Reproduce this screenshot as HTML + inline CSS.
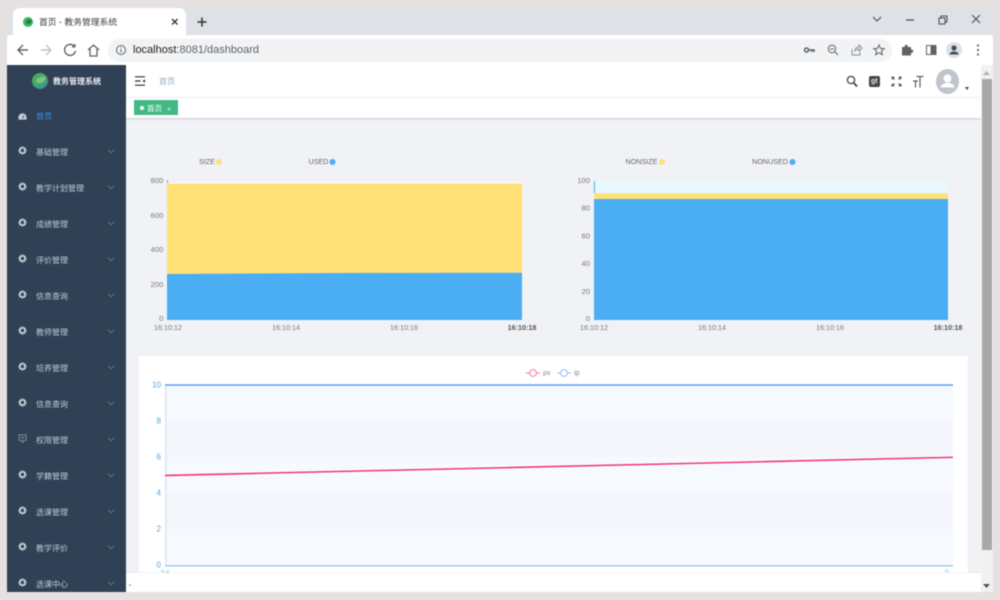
<!DOCTYPE html>
<html lang="zh"><head><meta charset="utf-8"><title>首页 - 教务管理系统</title>
<style>
html,body{margin:0;padding:0;width:1000px;height:600px;overflow:hidden;background:#e6e1e1}
body{font-family:"Liberation Sans","Noto Sans CJK SC",sans-serif;position:relative}
#w{position:absolute;left:0;top:0;width:1000px;height:600px;filter:blur(.4px)}
.a{position:absolute}
.t{position:absolute;white-space:nowrap;line-height:1}
.m{position:absolute;left:36px;font-size:8px;color:#bfcbd9;white-space:nowrap;line-height:10px;margin-top:1px}
.g{position:absolute;left:18px;width:9px;height:9px}
.c{position:absolute;left:107px;width:8px;height:5px}
</style></head><body><div id="w">
<div class="a" style="left:7px;top:8px;width:986px;height:27px;background:#dee1e6"></div>
<div class="a" style="left:13px;top:8px;width:173px;height:27px;background:#fff;border-radius:7px 7px 0 0"></div>
<div class="a" style="left:7px;top:35px;width:986px;height:30px;background:#fff"></div>
<svg class="a" style="left:21px;top:15px" width="14" height="14" viewBox="0 0 14 14"><circle cx="7" cy="7" r="5" fill="#41b45a"/><path d="M5 8c0-3 3-4 6-3-1 3-3 5-6 3z" fill="#1f7a4a"/></svg>
<div class="t" style="left:39px;top:17.500px;font-size:8.800px;color:#3c4043">首页 - 教务管理系统</div>
<svg class="a" style="left:170px;top:17px" width="10" height="10" viewBox="0 0 10 10"><path d="M2 2l5.500 5.500M7.500 2L2 7.500" stroke="#303134" stroke-width="1.300"/></svg>
<svg class="a" style="left:195px;top:15px" width="14" height="14" viewBox="0 0 14 14"><path d="M7 2.500v9M2.500 7h9" stroke="#303134" stroke-width="1.500"/></svg>
<svg class="a" style="left:870px;top:12.500px" width="112" height="14" viewBox="0 0 112 14" fill="none" stroke="#45494e" stroke-width="1"><path d="M3 4l4 4 4-4"/><path d="M36 7h8" stroke-width="1.200"/><path d="M69 5h6v6h-6zM71 5V3h6v6h-2"/><path d="M102 2l8 8M110 2l-8 8"/></svg>

<svg class="a" style="left:16px;top:41px" width="90" height="18" viewBox="0 0 90 18" fill="none" stroke="#5f6368" stroke-width="1.400"><path d="M12 9H2.500M7 4L2 9l5 5"/><path d="M25 9h9M30 4l5 5-5 5" stroke="#c0c3c7"/><path d="M58 5a5.500 5.500 0 1 0 1.500 5"/><path d="M59.500 2.500v4h-4" fill="#5f6368" stroke="none"/><path d="M72 9l5.500-5 5.500 5M74 8v7h7V8" stroke-width="1.300"/></svg>
<div class="a" style="left:108px;top:38.500px;width:784px;height:23px;border-radius:12px;background:#f1f3f4"></div>
<svg class="a" style="left:115px;top:44px" width="12" height="12" viewBox="0 0 12 12" fill="none" stroke="#5f6368"><circle cx="6" cy="6" r="4.500"/><path d="M6 5.200v3.300M6 3.300v1"/></svg>
<div class="t" style="left:133px;top:45px;font-size:11px;color:#202124">localhost<span style="color:#5f6368">:8081/dashboard</span></div>
<svg class="a" style="left:803px;top:43px" width="184" height="14" viewBox="0 0 184 14" fill="none" stroke="#5f6368"><circle cx="3.500" cy="7" r="2" stroke-width="1.500"/><path d="M5 7h6v2M9 7v2" stroke-width="1.500"/><circle cx="29" cy="6" r="3.700"/><path d="M32 9l3 3M27 6h4"/><path d="M49 6v6h8V9M52 8c0-3 2-4 4-4V2l3 3-3 3V6c-2 0-3 1-4 2z" stroke="#8a8e93"/><path d="M76 2l1.500 3.400 3.700.3-2.800 2.400.9 3.600-3.300-2-3.300 2 .9-3.600-2.800-2.400 3.700-.3z"/><path d="M103 5h2.500c0-3 3.500-3 3.500 0h3v2.500c3 0 3 3.500 0 3.500v2.500h-9z" fill="#5f6368" stroke="none" transform="translate(-4 -1)"/><path d="M123.500 2.500h9v9h-9z"/><path d="M128 2.500h5v9h-5z" fill="#5f6368"/></svg>
<div class="a" style="left:946px;top:42px;width:16px;height:16px;border-radius:8px;background:#dfe1e5"></div>
<svg class="a" style="left:946px;top:42px" width="16" height="16" viewBox="0 0 16 16" fill="#41505f"><circle cx="8" cy="6" r="2.600"/><path d="M3.500 12.500c0-4 9-4 9 0z"/></svg>
<svg class="a" style="left:975px;top:43px" width="6" height="14" viewBox="0 0 6 14" fill="#5f6368"><circle cx="3" cy="2.500" r="1.100"/><circle cx="3" cy="7" r="1.100"/><circle cx="3" cy="11.500" r="1.100"/></svg>

<div class="a" style="left:126px;top:65px;width:855px;height:527px;background:#f0f2f6"></div>
<div class="a" style="left:126px;top:65px;width:855px;height:32px;background:#fff"></div>
<div class="a" style="left:126px;top:97px;width:855px;height:1px;background:#f0f1f3"></div>
<div class="a" style="left:126px;top:98px;width:855px;height:20px;background:#fff;box-shadow:0 1px 2px rgba(0,21,41,.18)"></div>

<svg class="a" style="left:135px;top:76px" width="11" height="11" viewBox="0 0 11 11" stroke="#303133" fill="#303133"><path d="M0 .8h10M0 5h5.500M0 9.200h10" stroke-width="1.200"/><path d="M10 3.300v3.400L7.500 5z" stroke="none"/></svg>
<div class="t" style="left:159px;top:78px;font-size:8px;color:#97a8be">首页</div>
<svg class="a" style="left:846px;top:75px" width="12" height="13" viewBox="0 0 12 13" fill="none" stroke="#444"><circle cx="5" cy="5" r="3.600" stroke-width="1.300"/><path d="M7.800 7.800l3.200 3.700" stroke-width="1.800"/></svg>
<div class="a" style="left:869px;top:76px;width:10.500px;height:11px;background:#444;border-radius:2px"></div>
<div class="t" style="left:871px;top:78px;font-size:7px;font-weight:bold;color:#e8e8e8">gt</div>
<svg class="a" style="left:891px;top:76px" width="11" height="11" viewBox="0 0 11 11" fill="#555"><path d="M.5.500h3l-.9.900 1.300 1.300-1.200 1.200-1.300-1.300-.9.900zM10.500.500v3l-.9-.9-1.300 1.300-1.200-1.200 1.300-1.300-.9-.9zM.5 10.500v-3l.9.900 1.300-1.300 1.200 1.200-1.300 1.300.9.900zM10.500 10.500h-3l.9-.9-1.300-1.300 1.200-1.200 1.300 1.300.9-.9z"/></svg>
<svg class="a" style="left:912px;top:75px" width="12" height="13" viewBox="0 0 12 13" fill="none" stroke="#444" stroke-width="1"><path d="M4.500 1.500h7M8 1.500V12.500M1 6h5M3.500 6v6.500"/></svg>
<div class="a" style="left:936px;top:68.500px;width:23px;height:25.500px;border-radius:50%;background:#c0c4cc"></div>
<svg class="a" style="left:936px;top:69px" width="23" height="25" viewBox="0 0 23 25" fill="#fff"><circle cx="11.500" cy="9.500" r="4"/><path d="M4.500 18.500c1-4 4-4.500 7-4.500s6 .5 7 4.500z"/></svg>
<svg class="a" style="left:965px;top:87px" width="4" height="3"><path d="M0 0h4L2 3z" fill="#444"/></svg>

<div class="a" style="left:134px;top:100px;width:43.700px;height:15px;background:#42b983"></div>
<div class="a" style="left:139.500px;top:105.500px;width:4.500px;height:4.500px;border-radius:50%;background:#fff"></div>
<div class="t" style="left:147px;top:105px;font-size:7.500px;color:#fff">首页</div>
<svg class="a" style="left:166.500px;top:107px" width="4" height="4" viewBox="0 0 4 4"><path d="M.7.700l2.600 2.600M3.300.700L.7 3.300" stroke="#cfeede" stroke-width=".7"/></svg>

<!-- sidebar -->
<div class="a" style="left:7px;top:65px;width:118.500px;height:527px;background:#304156;overflow:hidden"></div>
<svg class="a" style="left:31px;top:72px" width="18" height="18" viewBox="0 0 18 18"><defs><linearGradient id="lg" x1="0" y1="0" x2="1" y2="1"><stop offset="0" stop-color="#4db848"/><stop offset="1" stop-color="#3a8f9f"/></linearGradient></defs><circle cx="9" cy="9" r="8" fill="url(#lg)"/><path d="M5 10c0-4 5-6 10-5-1 5-5 8-10 5z" fill="#7cc576"/></svg>
<div class="t" style="left:53px;top:78px;font-size:8px;font-weight:bold;color:#e8ecf0">教务管理系统</div>

<svg class="g" style="top:111.500px" viewBox="0 0 10 10"><path d="M.5 8.500V6a4.500 4.500 0 0 1 9 0v2.500z" fill="#c9cdd3"/><path d="M5 7l1.500-3" stroke="#304156"/></svg>
<div class="m" style="top:111px;color:#3b8ee6">首页</div>

<svg width="0" height="0" style="position:absolute"><defs><g id="gear"><circle cx="5" cy="5" r="2.900" fill="none" stroke="#c9cdd3" stroke-width="2"/><path d="M5 .3v1.800M5 7.900v1.800M.3 5h1.800M7.900 5h1.800M1.700 1.700l1.200 1.200M7.100 7.100l1.200 1.200M8.300 1.700L7.100 2.900M2.900 7.100L1.700 8.300" stroke="#c9cdd3" stroke-width="1.300"/></g><path id="chev" d="M1 .8l3 3 3-3" fill="none" stroke="#6d7c8e" stroke-width=".8"/></defs></svg>

<svg class="g" style="top:146px" viewBox="0 0 10 10"><use href="#gear"/></svg><div class="m" style="top:147px">基础管理</div><svg class="c" style="top:148.500px"><use href="#chev"/></svg>
<svg class="g" style="top:182px" viewBox="0 0 10 10"><use href="#gear"/></svg><div class="m" style="top:183px">教学计划管理</div><svg class="c" style="top:184.500px"><use href="#chev"/></svg>
<svg class="g" style="top:218px" viewBox="0 0 10 10"><use href="#gear"/></svg><div class="m" style="top:219px">成绩管理</div><svg class="c" style="top:220.500px"><use href="#chev"/></svg>
<svg class="g" style="top:254px" viewBox="0 0 10 10"><use href="#gear"/></svg><div class="m" style="top:255px">评价管理</div><svg class="c" style="top:256.500px"><use href="#chev"/></svg>
<svg class="g" style="top:290px" viewBox="0 0 10 10"><use href="#gear"/></svg><div class="m" style="top:291px">信息查询</div><svg class="c" style="top:292.500px"><use href="#chev"/></svg>
<svg class="g" style="top:326px" viewBox="0 0 10 10"><use href="#gear"/></svg><div class="m" style="top:327px">教师管理</div><svg class="c" style="top:328.500px"><use href="#chev"/></svg>
<svg class="g" style="top:362px" viewBox="0 0 10 10"><use href="#gear"/></svg><div class="m" style="top:363px">培养管理</div><svg class="c" style="top:364.500px"><use href="#chev"/></svg>
<svg class="g" style="top:398px" viewBox="0 0 10 10"><use href="#gear"/></svg><div class="m" style="top:399px">信息查询</div><svg class="c" style="top:400.500px"><use href="#chev"/></svg>
<svg class="g" style="top:434px" viewBox="0 0 10 10" fill="none" stroke="#9aa6b4" stroke-width=".8"><path d="M1 1h8v6H6v2H4V7H1z"/><path d="M3 3l2 2 2-2"/></svg><div class="m" style="top:435px">权限管理</div><svg class="c" style="top:436.500px"><use href="#chev"/></svg>
<svg class="g" style="top:470px" viewBox="0 0 10 10"><use href="#gear"/></svg><div class="m" style="top:471px">学籍管理</div><svg class="c" style="top:472.500px"><use href="#chev"/></svg>
<svg class="g" style="top:506px" viewBox="0 0 10 10"><use href="#gear"/></svg><div class="m" style="top:507px">选课管理</div><svg class="c" style="top:508.500px"><use href="#chev"/></svg>
<svg class="g" style="top:542px" viewBox="0 0 10 10"><use href="#gear"/></svg><div class="m" style="top:543px">教学评价</div><svg class="c" style="top:544.500px"><use href="#chev"/></svg>
<svg class="g" style="top:578px" viewBox="0 0 10 10"><use href="#gear"/></svg><div class="m" style="top:579px">选课中心</div><svg class="c" style="top:580.500px"><use href="#chev"/></svg>

<!-- charts -->
<svg class="a" style="left:126px;top:118px" width="855" height="474" viewBox="126 118 855 474" font-family="Liberation Sans, sans-serif" font-size="7.200" fill="#666">
<text x="199" y="164">SIZE</text><circle cx="219" cy="162" r="3" fill="#ffe07a"/>
<text x="308.500" y="164">USED</text><circle cx="332.500" cy="162" r="3" fill="#4baef2"/>
<path d="M167 182.500h355v1H167z" fill="#fff"/>
<path d="M167 183.500h355V272.700l-355 1.300z" fill="#ffe077"/>
<path d="M167 274l177-1 178-.3V320H167z" fill="#4baef2"/>
<path d="M167.500 180v3" stroke="#4baef2"/>
<g text-anchor="end" fill="#777" font-size="7.600"><text x="163.300" y="183">800</text><text x="163.300" y="218">600</text><text x="163.300" y="252">400</text><text x="163.300" y="287">200</text><text x="163.300" y="321">0</text></g>
<g text-anchor="middle" fill="#777"><text x="168" y="330">16:10:12</text><text x="286" y="330">16:10:14</text><text x="404" y="330">16:10:16</text><text x="522" y="330" font-weight="bold" fill="#555">16:10:18</text></g>

<text x="625.500" y="164">NONSIZE</text><circle cx="662" cy="162" r="3" fill="#ffe07a"/>
<text x="752" y="164">NONUSED</text><circle cx="792.500" cy="162" r="3" fill="#4baef2"/>
<path d="M594 181h354v139H594z" fill="#e9f7fe"/>
<path d="M594 193.300h354v5.700H594z" fill="#ffe077"/>
<path d="M594 199h354v121H594z" fill="#4baef2"/>
<path d="M594.500 181v12" stroke="#4baef2"/>
<g text-anchor="end" fill="#777" font-size="7.600"><text x="590" y="183">100</text><text x="590" y="210.500">80</text><text x="590" y="238.500">60</text><text x="590" y="266">40</text><text x="590" y="294">20</text><text x="590" y="321">0</text></g>
<g text-anchor="middle" fill="#777"><text x="594" y="330">16:10:12</text><text x="712" y="330">16:10:14</text><text x="830" y="330">16:10:16</text><text x="948" y="330" font-weight="bold" fill="#555">16:10:18</text></g>

<rect x="138.700" y="356" width="829" height="217" fill="#fff"/>
<rect x="166" y="385" width="786.500" height="181" fill="#f6f9fe"/>
<rect x="166" y="421" width="786.500" height="36" fill="#f4f6fb"/>
<rect x="166" y="493" width="786.500" height="36.500" fill="#f4f6fb"/>
<path d="M165.800 385v181" stroke="#d6e9f8" stroke-width="1.500"/>
<path d="M165 385h788" stroke="#5f9ef2" stroke-width="1.400"/>
<path d="M165 565.800h788" stroke="#82bdeb" stroke-width="1.200"/>
<path d="M165 475.500L953 457.300" stroke="#f5286f" stroke-width="1.400"/>
<g text-anchor="end" fill="#4fa8e8" font-size="8"><text x="161" y="387.500">10</text><text x="161" y="423.500">8</text><text x="161" y="459.500">6</text><text x="161" y="495.500">4</text><text x="161" y="531.500">2</text><text x="161" y="567.500">0</text></g>
<path d="M526 373h14" stroke="#fb7ba5"/><circle cx="533" cy="373" r="3.400" fill="#fff" stroke="#fb7ba5"/><text x="543" y="375" fill="#888">pv</text>
<path d="M557 373h14" stroke="#94baf6"/><circle cx="564" cy="373" r="3.400" fill="#fff" stroke="#94baf6"/><text x="574" y="375" fill="#888">ip</text>
<text x="161" y="574" font-size="6" fill="#8cc5ea">5:4</text><text x="945" y="574" font-size="6" fill="#8cc5ea">5:</text>
</svg>

<!-- footer strip -->
<div class="a" style="left:126px;top:573.300px;width:855px;height:18.700px;background:#fff;box-shadow:0 -1px 1px rgba(0,0,0,.05)"></div>
<div class="a" style="left:129px;top:584px;width:1.500px;height:1.500px;background:#bbb"></div>

<!-- scrollbar -->
<div class="a" style="left:981px;top:65px;width:12px;height:527px;background:#f1f1f1"></div>
<div class="a" style="left:982px;top:79px;width:9.500px;height:471px;background:#a8a8a8"></div>
<svg class="a" style="left:983px;top:70px" width="8" height="6"><path d="M0 5h7L3.500 1z" fill="#b5b5b5"/></svg>
<svg class="a" style="left:983px;top:583px" width="8" height="6"><path d="M0 1h7L3.500 5z" fill="#505050"/></svg>
</div></body></html>
